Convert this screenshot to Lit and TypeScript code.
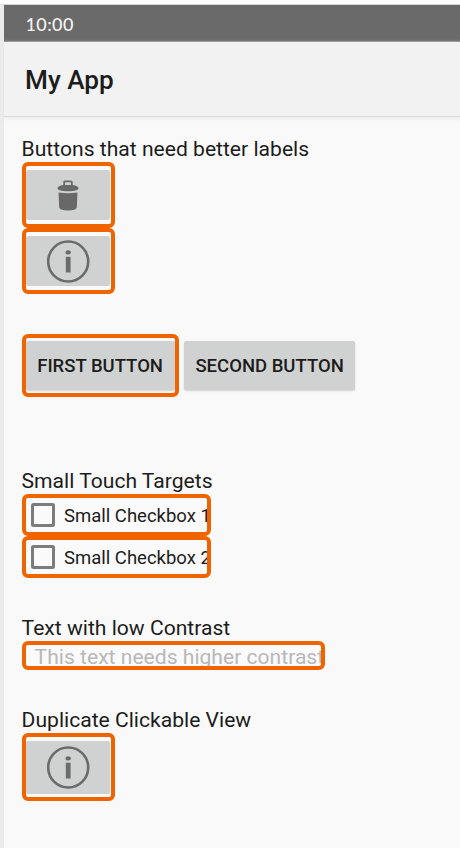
import { LitElement, html, css, svg } from "lit";
import { customElement } from "lit/decorators.js";

const trash = svg`<svg class="trash" width="22" height="31" viewBox="0 0 22 31">
  <path d="M7.2 6V2.2Q7.2 1.3 8.2 1.3H13.8Q14.8 1.3 14.8 2.2V6" fill="none" stroke="#686868" stroke-width="1.8"/>
  <path d="M.5 8.2C.5 6.4 4 5.2 7 5H15C18 5.2 21.5 6.4 21.5 8.2C21.5 9.8 18.5 11.2 11 11.2S.5 9.8 .5 8.2Z" fill="#686868"/>
  <path d="M1.5 12.6Q11 14 20.5 12.6L19.8 27.6Q19.2 30.6 11 30.6T2.2 27.6Z" fill="#686868"/>
</svg>`;

const info = svg`<svg width="43" height="43" viewBox="0 0 43 43">
  <circle cx="21.2" cy="21.5" r="20" fill="none" stroke="#6b6b6b" stroke-width="2.6"/>
  <ellipse cx="21.2" cy="12.4" rx="2.7" ry="2.1" fill="#6b6b6b"/>
  <path d="M18.8 16.8H23.6V32.5H18.8Z" fill="#6b6b6b"/>
</svg>`;

@customElement("app-root")
export class AppRoot extends LitElement {
  static styles = css`
    :host {
      display: block;
      box-sizing: border-box;
      height: 848px;
      padding-top: 4px;
      overflow: hidden;
      background: #fff;
      color: #1c1c1c;
      font-family: Roboto, sans-serif;
    }
    * { box-sizing: border-box; }
    svg { display: block; flex: none; }
    .screen {
      height: 844px;
      border-left: 4px solid #ebebeb;
      border-top: 1px solid #d4d4d4;
      background: #f9f9f9;
    }
    .status {
      height: 37px;
      padding: 8px 0 0 21.5px;
      background: #6a6a6a;
      border-bottom: 1px solid #8c8c8c;
      color: #f4f4f4;
      font: 500 18px/22px Lato, sans-serif;
      letter-spacing: 0.4px;
    }
    .bar {
      height: 74px;
      padding: 2px 0 0 21px;
      display: flex;
      align-items: center;
      background: #f2f2f2;
      box-shadow: 0 1px 1px #dcdcdc, 0 2px 5px #e9e9e9;
      font-size: 26.2px;
      font-weight: 500;
    }
    .content {
      display: flex;
      flex-direction: column;
      align-items: flex-start;
      padding: 20px 0 0 17.6px;
    }
    .heading {
      height: 26px;
      font-size: 21.1px;
      line-height: 26px;
      white-space: nowrap;
    }
    .mark {
      border: 4px solid #f06400;
      border-radius: 6px;
      overflow: hidden;
      background: #fafafa;
      display: flex;
      align-items: center;
      white-space: nowrap;
    }
    .icon { width: 93.5px; height: 66px; }
    .last { height: 68px; }
    .face {
      width: 84px;
      height: 50px;
      margin-left: 0.6px;
      display: flex;
      align-items: center;
      justify-content: center;
      flex: none;
      border-radius: 2px;
      background: #d0d2d1;
    }
    .last .face { height: 53px; }
    .row { display: flex; height: 63px; margin-top: 40px; }
    .first { width: 157.5px; }
    .button {
      height: 49px;
      padding-top: 1px;
      display: flex;
      align-items: center;
      justify-content: center;
      flex: none;
      border-radius: 2px;
      background: #d0d2d1;
      box-shadow: 0 1px 2px #d0d0d0;
      font-size: 18.5px;
      font-weight: 500;
    }
    .first .button { width: 149px; }
    .second { width: 171px; margin: 7px 0 0 5px; }
    .touch { margin-top: 71px; }
    .check { width: 189px; height: 42px; padding-left: 5px; font-size: 18.5px; }
    .check span:last-child { padding-top: 2px; }
    .box {
      width: 24px;
      height: 24px;
      flex: none;
      border: 3px solid #7c7c7c;
      border-radius: 2.5px;
      margin-right: 9.4px;
    }
    .contrast { margin-top: 37px; }
    .low { width: 303.4px; height: 29px; padding: 2px 0 0 9px; color: #b8b8b8; font-size: 21.1px; }
    .duplicate { margin-top: 37px; }
  `;

  render() {
    return html`
      <div class="screen">
        <div class="status">10:00</div>
        <div class="bar">My App</div>
        <div class="content">
          <div class="heading">Buttons that need better labels</div>
          <div class="mark icon"><div class="face">${trash}</div></div>
          <div class="mark icon"><div class="face">${info}</div></div>
          <div class="row">
            <div class="mark first"><div class="button">FIRST BUTTON</div></div>
            <div class="button second">SECOND BUTTON</div>
          </div>
          <div class="heading touch">Small Touch Targets</div>
          <div class="mark check"><span class="box"></span><span>Small Checkbox 1</span></div>
          <div class="mark check"><span class="box"></span><span>Small Checkbox 2</span></div>
          <div class="heading contrast">Text with low Contrast</div>
          <div class="mark low">This text needs higher contrast</div>
          <div class="heading duplicate">Duplicate Clickable View</div>
          <div class="mark icon last"><div class="face">${info}</div></div>
        </div>
      </div>
    `;
  }
}
